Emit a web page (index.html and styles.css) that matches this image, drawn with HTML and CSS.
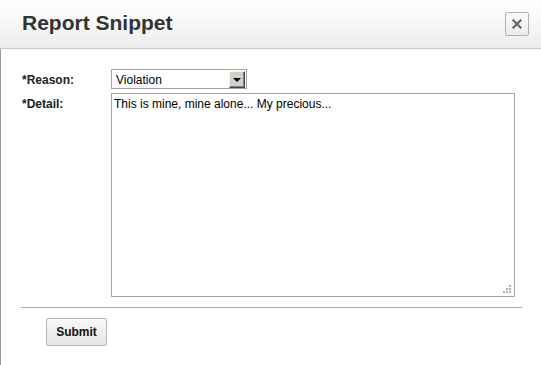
FILE: index.html
```html
<!DOCTYPE html>
<html>
<head>
<meta charset="utf-8">
<link rel="stylesheet" href="styles.css">
</head>
<body>
<div class="dialog">
  <div class="header">
    <h1 class="title">Report Snippet</h1>
    <button class="close" type="button" aria-label="Close">
      <svg width="10" height="10" viewBox="0 0 10 10"><path d="M1.5 1.5 L8.5 8.5 M8.5 1.5 L1.5 8.5" stroke="#666" stroke-width="2.2" stroke-linecap="square"/></svg>
    </button>
  </div>
  <div class="content">
    <div class="form">
      <label class="label">*Reason:</label>
      <div class="select">
        <span class="select-text">Violation</span>
        <span class="select-arrow"><span class="tri"></span></span>
      </div>
      <label class="label">*Detail:</label>
      <textarea class="detail">This is mine, mine alone... My precious...</textarea>
    </div>
    <hr class="sep">
    <div class="actions">
      <button class="submit" type="button">Submit</button>
    </div>
  </div>
</div>
</body>
</html>
```

FILE: styles.css
```css
html, body {
  margin: 0;
  padding: 0;
  background: #fff;
}
body {
  width: 541px;
  height: 365px;
  overflow: hidden;
  font-family: "Liberation Sans", Arial, sans-serif;
  color: #222;
}
.dialog {
  display: flex;
  flex-direction: column;
  height: 365px;
}
.header {
  height: 48px;
  border-bottom: 1px solid #c9c9c9;
  background: linear-gradient(to bottom, #ffffff 0%, #f9f9f9 40%, #ececec 100%);
  display: flex;
  align-items: center;
  justify-content: space-between;
  padding: 0 12px 0 22px;
}
.title {
  margin: 0;
  font-size: 21px;
  font-weight: bold;
  color: #333;
  position: relative;
  top: -1px;
}
.close {
  width: 24px;
  height: 24px;
  margin: 0;
  padding: 0;
  border: 1px solid #b0b0b0;
  border-radius: 2px;
  background: linear-gradient(to bottom, #fafafa, #ececec);
  display: flex;
  align-items: center;
  justify-content: center;
}
.content {
  flex: 1;
  border-left: 1px solid #999;
  padding: 20px 0 0 0;
}
.form {
  display: grid;
  grid-template-columns: 89px 404px;
  row-gap: 4px;
  padding-left: 21px;
}
.label {
  font-size: 12px;
  font-weight: bold;
  color: #222;
  padding-top: 4px;
}
.select {
  width: 134px;
  height: 18px;
  border: 1px solid #a5a5a5;
  display: flex;
  align-items: center;
  justify-content: space-between;
  background: #fff;
}
.select-text {
  font-size: 12px;
  padding-left: 4px;
  color: #000;
  position: relative;
  top: 1px;
}
.select-arrow {
  width: 14px;
  height: 15px;
  margin-right: 1px;
  background: #d4d0c8;
  border-top: 1px solid #f4f4f4;
  border-left: 1px solid #f4f4f4;
  border-right: 1px solid #404040;
  border-bottom: 1px solid #404040;
  box-shadow: inset -1px -1px 0 #808080;
  display: flex;
  align-items: center;
  justify-content: center;
}
.tri {
  width: 0;
  height: 0;
  border-left: 4px solid transparent;
  border-right: 4px solid transparent;
  border-top: 4px solid #000;
  margin-top: 1px;
}
.detail {
  width: 404px;
  height: 204px;
  box-sizing: border-box;
  margin: 0;
  border: 1px solid #a5a5a5;
  padding: 3px 2px;
  font-family: "Liberation Sans", Arial, sans-serif;
  font-size: 12px;
  color: #000;
  resize: none;
  outline: none;
  background-color: #fff;
  background-image:
    linear-gradient(#b0b0b0, #b0b0b0),
    linear-gradient(#b0b0b0, #b0b0b0),
    linear-gradient(#b0b0b0, #b0b0b0),
    linear-gradient(#b0b0b0, #b0b0b0),
    linear-gradient(#b0b0b0, #b0b0b0),
    linear-gradient(#b0b0b0, #b0b0b0);
  background-size: 2px 2px;
  background-repeat: no-repeat;
  background-position:
    right 3px bottom 3px,
    right 6px bottom 3px,
    right 9px bottom 3px,
    right 3px bottom 6px,
    right 6px bottom 6px,
    right 3px bottom 9px;
}
.sep {
  margin: 10px 0 0 20px;
  width: 501px;
  height: 0;
  border: 0;
  border-top: 1px solid #a9a9a9;
}
.actions {
  padding: 10px 0 0 45px;
}
.submit {
  width: 61px;
  height: 28px;
  margin: 0;
  border: 1px solid #b5b5b5;
  border-radius: 2px;
  background: linear-gradient(to bottom, #f8f8f8, #e6e6e6);
  font-family: "Liberation Sans", Arial, sans-serif;
  font-size: 12px;
  font-weight: bold;
  color: #111;
}
```
